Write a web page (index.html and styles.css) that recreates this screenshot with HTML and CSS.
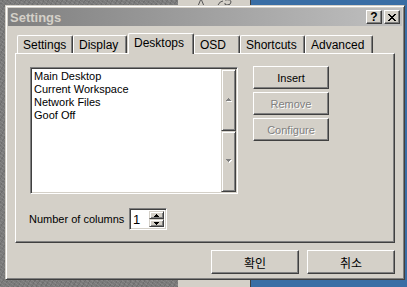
FILE: index.html
```html
<!doctype html>
<html lang="en">
<head>
    <meta charset="UTF-8">
    <title>Settings</title>
    <link rel="stylesheet" href="styles.css">
</head>
<body>
<div class="backwin">
    <svg class="backwin-ink" width="60" height="6" viewBox="0 0 60 6">
        <path d="M20 6 L22.5 0 M23.5 0 L26 6" />
        <path d="M40 5 Q42 1 45 1 M47 0 Q53 -1 53 2 Q53 5 49 5 Q46 5 47 3" />
    </svg>
</div>

<div class="dialog">
    <div class="titlebar">
        <span class="title">Settings</span>
        <div class="caption-btns">
            <span class="cap-btn cap-help">?</span>
            <span class="cap-btn">
                <svg width="8" height="7" viewBox="0 0 8 7">
                    <path d="M0 0h2v1h-2z M6 0h2v1h-2z M1 1h2v1h-2z M5 1h2v1h-2z M2 2h4v1h-4z M3 3h2v1h-2z M2 4h4v1h-4z M1 5h2v1h-2z M5 5h2v1h-2z M0 6h2v1h-2z M6 6h2v1h-2z" />
                </svg>
            </span>
        </div>
    </div>

    <div class="tabs">
        <div class="tab tab-settings">Settings</div>
        <div class="tab tab-display">Display</div>
        <div class="tab tab-desktops tab-active">Desktops</div>
        <div class="tab tab-osd">OSD</div>
        <div class="tab tab-shortcuts">Shortcuts</div>
        <div class="tab tab-advanced">Advanced</div>
    </div>

    <div class="panel">
        <div class="left-col">
            <div class="listbox">
                <ul class="list">
                    <li>Main Desktop</li>
                    <li>Current Workspace</li>
                    <li>Network Files</li>
                    <li>Goof Off</li>
                </ul>
                <div class="scrollbar">
                    <div class="sb-btn">
                        <svg class="arrow-off" width="6" height="4" viewBox="0 0 6 4">
                            <path class="hi" d="M3 1h1v1h1v1h1v1H1V3h1V2h1z" />
                            <path d="M2 0h1v1h1v1h1v1H0V2h1V1h1z" />
                        </svg>
                    </div>
                    <div class="sb-btn">
                        <svg class="arrow-off" width="6" height="4" viewBox="0 0 6 4">
                            <path class="hi" d="M1 1h5v1h-1v1h-1v1h-1v-1h-1v-1h-1z" />
                            <path d="M0 0h5v1h-1v1h-1v1h-1v-1h-1v-1h-1z" />
                        </svg>
                    </div>
                </div>
            </div>

            <div class="columns-row">
                <span class="columns-label">Number of columns</span>
                <div class="spin">
                    <span class="spin-value">1</span>
                    <div class="spin-btns">
                        <span class="spin-btn">
                            <svg width="5" height="3" viewBox="0 0 5 3"><path d="M2 0h1v1h1v1h1v1H0V2h1V1h1z" /></svg>
                        </span>
                        <span class="spin-btn">
                            <svg width="5" height="3" viewBox="0 0 5 3"><path d="M0 0h5v1h-1v1h-1v1h-1v-1h-1v-1h-1z" /></svg>
                        </span>
                    </div>
                </div>
            </div>
        </div>

        <div class="right-col">
            <button class="btn btn-side">Insert</button>
            <button class="btn btn-side" disabled>Remove</button>
            <button class="btn btn-side" disabled>Configure</button>
        </div>
    </div>

    <div class="footer">
        <button class="btn btn-footer">확인</button>
        <button class="btn btn-footer">취소</button>
    </div>
</div>
</body>
</html>
```

FILE: styles.css
```css
* {
    box-sizing: border-box;
}
body {
    margin: 0;
    width: 407px;
    height: 287px;
    overflow: hidden;
    position: relative;
    padding: 5px 0 0 5px;
    font-family: "Liberation Sans", Arial, sans-serif;
    font-size: 11px;
    color: #000;
    background-color: #7a7a7a;
    background-image:
        linear-gradient(to right, transparent 251px, #3a6ea5 251px),
        repeating-linear-gradient(37deg, rgba(255, 255, 255, 0.09) 0 1px, transparent 1px 3px),
        repeating-linear-gradient(-61deg, rgba(0, 0, 0, 0.09) 0 1px, transparent 1px 4px);
}

/* window behind the dialog */
.backwin {
    position: absolute;
    left: 178px;
    top: 0;
    width: 73px;
    height: 287px;
    background: #d4d0c8;
    border-right: 1px solid #404040;
}
.backwin-ink {
    display: block;
}
.backwin-ink path {
    fill: none;
    stroke: #555;
    stroke-width: 1;
}

.dialog {
    position: relative;
    z-index: 1;
    width: 400px;
    height: 275px;
    padding: 2px;
    background: #d4d0c8;
    border: 1px solid;
    border-color: #d4d0c8 #404040 #404040 #d4d0c8;
    box-shadow: inset 1px 1px #fff, inset -1px -1px #808080;
}

.titlebar {
    height: 18px;
    display: flex;
    align-items: center;
    justify-content: space-between;
    padding: 0 2px;
    background: linear-gradient(to right, #808080, #c0c0c0);
}
.title {
    color: #d4d0c8;
    font-weight: bold;
    font-size: 13px;
}
.caption-btns {
    display: flex;
    gap: 2px;
}
.cap-btn {
    width: 16px;
    height: 14px;
    display: flex;
    align-items: center;
    justify-content: center;
    background: #d4d0c8;
    border: 1px solid;
    border-color: #fff #404040 #404040 #fff;
    box-shadow: inset -1px -1px #808080;
}
.cap-help {
    font-weight: bold;
    font-size: 12px;
    line-height: 12px;
}
.cap-btn svg {
    display: block;
    fill: #000;
}

/* tabs */
.tabs {
    display: flex;
    align-items: flex-end;
    height: 20px;
    margin: 7px 0 0 9px;
}
.tab {
    position: relative;
    height: 18px;
    padding: 1px 0 0 5px;
    font-size: 12px;
    line-height: 16px;
    white-space: nowrap;
    background: #d4d0c8;
    border-top: 1px solid #fff;
    border-left: 1px solid #fff;
    border-right: 1px solid #404040;
    border-radius: 2px 2px 0 0;
    box-shadow: inset -1px 0 #808080;
}
.tab-settings { width: 56px; }
.tab-display { width: 54px; }
.tab-desktops { width: 66px; margin-left: 1px; }
.tab-osd { width: 46px; }
.tab-shortcuts { width: 65px; }
.tab-advanced { width: 68px; }
.tab-active {
    z-index: 2;
    height: 21px;
    margin-bottom: -1px;
    padding-top: 1px;
}

.panel {
    display: flex;
    width: 380px;
    height: 190px;
    margin-left: 7px;
    padding: 13px 0 0 14px;
    border: 1px solid;
    border-color: #fff #404040 #404040 #fff;
    box-shadow: inset -1px -1px #808080;
}

/* sunken list with scrollbar */
.listbox {
    display: flex;
    width: 208px;
    height: 127px;
    border: 1px solid;
    border-color: #808080 #fff #fff #808080;
    box-shadow: inset 1px 1px #404040, inset -1px -1px #d4d0c8;
    background: #fff;
    padding: 2px 1px 1px 2px;
}
.list {
    flex: 1;
    margin: 0;
    padding: 0 0 0 1px;
    list-style: none;
    line-height: 13px;
}
.scrollbar {
    width: 15px;
    display: flex;
    flex-direction: column;
    margin: -1px 0 0 0;
}
.sb-btn {
    flex: 1;
    display: flex;
    align-items: center;
    justify-content: center;
    background: #d4d0c8;
    border: 1px solid;
    border-color: #d4d0c8 #404040 #404040 #d4d0c8;
    box-shadow: inset 1px 1px #fff, inset -1px -1px #808080;
}
.arrow-off path {
    fill: #808080;
}
.arrow-off path.hi {
    fill: #fff;
}

.columns-row {
    display: flex;
    align-items: center;
    margin: 14px 0 0 -1px;
}
.columns-label {
    width: 100px;
    flex: none;
}
.spin {
    display: flex;
    width: 38px;
    height: 22px;
    padding: 2px;
    background: #fff;
    border: 1px solid;
    border-color: #808080 #fff #fff #808080;
    box-shadow: inset 1px 1px #404040, inset -1px -1px #d4d0c8;
}
.spin-value {
    flex: 1;
    font-size: 13px;
    line-height: 18px;
    padding-left: 1px;
}
.spin-btns {
    display: flex;
    flex-direction: column;
    width: 15px;
}
.spin-btn {
    flex: 1;
    display: flex;
    align-items: center;
    justify-content: center;
    background: #d4d0c8;
    border: 1px solid;
    border-color: #d4d0c8 #404040 #404040 #d4d0c8;
    box-shadow: inset 1px 1px #fff, inset -1px -1px #808080;
}
.spin-btn svg {
    display: block;
    fill: #000;
}

/* push buttons */
.right-col {
    display: flex;
    flex-direction: column;
    gap: 3px;
    margin: -1px 0 0 15px;
}
.btn {
    padding: 0;
    font-family: inherit;
    font-size: 11px;
    color: #000;
    background: #d4d0c8;
    border: 1px solid;
    border-color: #fff #404040 #404040 #fff;
    box-shadow: inset -1px -1px #808080;
    border-radius: 0;
}
.btn:disabled {
    color: #808080;
    text-shadow: 1px 1px 0 #fff;
}
.btn-side {
    width: 76px;
    height: 23px;
}

.footer {
    display: flex;
    justify-content: flex-end;
    gap: 8px;
    width: 380px;
    margin: 7px 0 0 7px;
}
.btn-footer {
    width: 88px;
    height: 24px;
    font-family: "Noto Sans CJK KR", "Liberation Sans", sans-serif;
    font-size: 12px;
}
```
